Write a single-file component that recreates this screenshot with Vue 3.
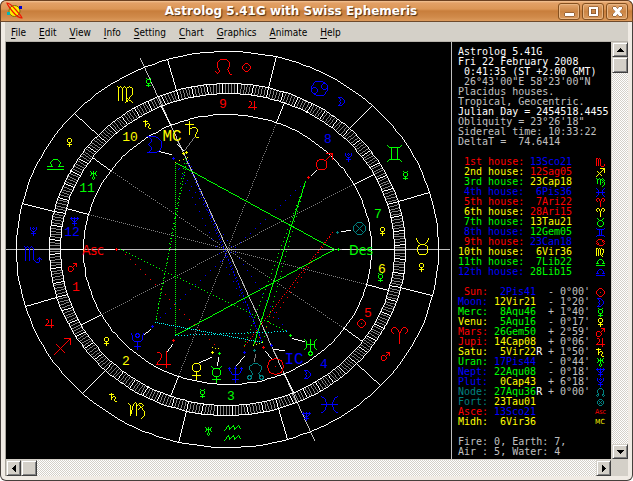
<script setup>
const menus = ['File', 'Edit', 'View', 'Info', 'Setting', 'Chart', 'Graphics', 'Animate', 'Help']

// Glyph outlines on a grid that runs from -4 to 4, drawn at double size.
const circle = (x, y, r) => {
  let d = ''
  for (let i = 0; i < 16; i++) {
    const a = (i * Math.PI) / 8
    d += `${i ? 'L' : 'M'}${(x + r * Math.cos(a)).toFixed(2)} ${(y + r * Math.sin(a)).toFixed(2)}`
  }
  return d + 'Z'
}
const glyphs = {
  Sun: circle(0, 0, 4) + 'M0 0H0',
  Moon: 'M-3.5-4L-1-4Q3.5-3.5 3.5 0Q3.5 3.5-1 4L-3.5 4Q-1.5 3.5-1.5 1.5L-3 0L-1.5-1.500Q-1.5-3.5-3.5-4',
  Mercury: 'M-2.5-4L-1.5-3H1.5L2.5-4' + circle(0, -1, 2) + 'M0 1V4M-2 2.5H2',
  Venus: circle(0, -2, 2) + 'M0 0V4M-2 2H2',
  Mars: circle(-1.5, 1.5, 2.5) + 'M.5-.5L4-4M1-4H4V-1',
  Jupiter: 'M-3-3.5H-2L-1-2.5V-1L-3.5 2.5H3.5M1.5-4V4',
  Saturn: 'M-3.5-2.5H.5M-1.5-4V2.5M-1.5 0L0-1H1.5L2.5 0V1L1.5 2.5V3.5L2 4H3',
  Uranus: 'M-3-4L-2-3V0L-3 1M3-4L2-3V0L3 1M-2-1.5H2M0-4V2' + circle(0, 3, 1),
  Neptune: 'M-3-3.5V-2L-1.5 0H1.5L3-2V-3.5M0-4V4M-1.5 2.5H1.5M-3.5-3H-2.5M2.5-3H3.5M-.5-3H.5',
  Pluto: circle(0, -3, 1) + 'M-3-4L-2.5-2.5V-1L-1.5 0H1.5L2.5-1V-2.5L3-4M0 0V4M-1.5 2.5H1.5',
  Node: 'M-2 2L-1.5 1L-3-1V-2.5L-1-4H1L3-2.5V-1L1.5 1L2 2' + circle(-3, 3, 1) + circle(3, 3, 1),
  Fortune: circle(0, 0, 3) + 'M-2-2L2 2M2-2L-2 2',
  Aries: 'M0 4V-1L-1-3L-2-4H-3L-4-3V-2L-3-1M0-1L1-3L2-4H3L4-3V-2L3-1',
  Taurus: circle(0, 1.5, 2.5) + 'M-3-4L-2.5-2.5L-1-1H1L2.5-2.5L3-4',
  Gemini: 'M-3.5-4L-2.5-3H2.5L3.5-4M-3.5 4L-2.5 3H2.5L3.5 4M-1.5-3V3M1.5-3V3',
  Cancer: circle(-2.5, 1, 1.5) + circle(2.5, -1, 1.5) + 'M-4 0L-4-1L-2-3.5H1.5L3-2.5M4 0V1L2 3.5H-1.5L-3 2.5',
  Leo: 'M-4 2.5L-3 3.5L-2 2.5L-3 .5V-2L-1.5-3.5H1.5L3-2V0L2 1.5L3 3.5L4 4',
  Virgo: 'M-4-4L-3.5-3.5V3M-3.5-3L-2.5-4L-1.5-3V3M-1.5-3L-.5-4L.5-3V3L1 3.5M.5-3L2-4L3.5-3V0L0 4M1 2L3.5 4',
  Libra: 'M-4 1H-1.5L-2.5-.5V-1L-1-2.5H1L2.5-1V-.5L1.5 1H4M-4 2.5H4',
  Scorpio: 'M-4-4L-3.5-3.5V3M-3.5-3L-2.5-4L-1.5-3V3M-1.5-3L-.5-4L.5-3V2.5L2 4H3L3.5 3V1.5M2.5 2.5L3.5 1.5L4.5 2.5',
  Sagittarius: 'M-4 4L4-4M1-4H4V-1M-3-1L1 3',
  Capricorn: 'M-4-3.5L-3-2.5V2.5L-1.5-3L-.5-4L0-3V2.5M0-2L1.5-3.5H2.5L3.5-2.5L1-.5M1.5-2.5L4 .5V2.5L2.5 4',
  Aquarius: 'M-4-1L-2-3.5L-1.5-1.5L.5-3.5L1-1.5L3-3.5L4-2M-4 4L-2 1.5L-1.5 3.5L.5 1.5L1 3.5L3 1.5L4 3',
  Pisces: 'M-4-4Q-1.5-2.5-1.5 0Q-1.5 2.5-4 4M4-4Q1.5-2.5 1.5 0Q1.5 2.5 4 4M-4 0H4',
}
// Nine-pixel versions, whole-pixel vertices only.
const smallShapes = {
  Sun: 'M-1-4H1L4-1V1L1 4H-1L-4 1V-1ZM0 0H0',
  Moon: 'M-3-4H0L3-1V1L0 4H-3L-1 2V1L-2 0L-1-1V-2Z',
  Mercury: 'M-2-4L-1-3H1L2-4M-1-3L-2-2V0L-1 1H1L2 0V-2L1-3M0 1V4M-2 3H2',
  Venus: 'M-1-4H1L2-3V-1L1 0H-1L-2-1V-3ZM0 0V4M-2 2H2',
  Mars: 'M-3-1H-1L1 1V2L-1 4H-3L-4 3V0ZM0 0L4-4M1-4H4V-1',
  Jupiter: 'M-3-4H-2L-1-3V-1L-4 2H4M2-4V4',
  Saturn: 'M-4-3H0M-2-4V2M-2 0L0-1H1L2 0V1L1 2V3L2 4H3',
  Uranus: 'M-3-4L-2-3V-1L-3 0M3-4L2-3V-1L3 0M-2-2H2M0-4V1M0 1L-1 2V3L0 4L1 3V2Z',
  Neptune: 'M-3-4V-2L-1 0H1L3-2V-4M0-4V4M-2 2H2M-4-3H-2M2-3H4M-1-3H1',
  Pluto: 'M0-4L1-3L0-2L-1-3ZM-3-4V-2L-1 0H1L3-2V-4M0 0V4M-2 2H2',
  Node: 'M-2 2L-3 0V-2L-1-4H1L3-2V0L2 2M-3 2L-4 3L-3 4L-2 3ZM3 2L4 3L3 4L2 3Z',
  Fortune: 'M-1-3H1L3-1V1L1 3H-1L-3 1V-1ZM-2-2L2 2M2-2L-2 2',
  Aries: 'M0 4V-1L-2-4H-3L-4-3V-2L-3-1M0-1L2-4H3L4-3V-2L3-1',
  Taurus: 'M-3-4L-1-2H1L3-4M-1-2L-3 0V2L-1 4H1L3 2V0L1-2',
  Gemini: 'M-4-4L-3-3H3L4-4M-4 4L-3 3H3L4 4M-1-3V3M1-3V3',
  Cancer: 'M-4-1L-2-3H1L2-2M3-2L2-1L3 0L4-1ZM4 1L2 3H-1L-2 2M-3 0L-4 1L-3 2L-2 1Z',
  Virgo: 'M-4-4V3M-3-4L-2-3V3M-1-4L0-3V2L2 4M1-4L3-3V0L1 3',
  Libra: 'M-4 1H-2L-3 0V-1L-1-3H1L3-1V0L2 1H4M-4 3H4',
  Scorpio: 'M-4-4V3M-3-4L-2-3V3M-1-4L0-3V3L1 4H3L4 3V2',
  Sagittarius: 'M-4 4L4-4M0-4H4V0M-3-1L1 3',
  Capricorn: 'M-4-4L-3-3V1M-3-2L-1-4L0-3V2M0-2L2-4L4-2L2 0M2-2L4 0V2L2 4',
  Pisces: 'M-4-4L-2-2V2L-4 4M4-4L2-2V2L4 4M-4 0H4',
}

// One square per plotted pixel, every `step` pixels along the line.
const line = ([x0, y0], [x1, y1], step = 1) => {
  const n = Math.max(Math.abs(x1 - x0), Math.abs(y1 - y0), 1)
  let d = ''
  for (let i = 0; i <= n; i += step) {
    d += `M${Math.round(x0 + ((x1 - x0) * i) / n)} ${Math.round(y0 + ((y1 - y0) * i) / n)}h1v1h-1z`
  }
  return d
}
// Turns an outline of M, L, H, V, Q and Z commands into plotted pixels.
const plot = (outline, x, y, size) => {
  const dot = (p) => [x + Math.round(p[0] * size), y + Math.round(p[1] * size)]
  let d = ''
  let cur = [0, 0]
  let start = cur
  const to = (p) => {
    d += line(dot(cur), dot(p))
    cur = p
  }
  for (const [, cmd, args] of outline.matchAll(/([MLHVQZ])([^MLHVQZ]*)/g)) {
    const n = (args.match(/-?(\d+\.?\d*|\.\d+)/g) || []).map(Number)
    if (cmd === 'M') cur = start = [n[0], n[1]]
    else if (cmd === 'L') to([n[0], n[1]])
    else if (cmd === 'H') {
      if (n[0] === cur[0]) {
        const [px, py] = dot(cur)
        d += `M${px} ${py}h1v1h-1z`
      } else to([n[0], cur[1]])
    } else if (cmd === 'V') to([cur[0], n[0]])
    else if (cmd === 'Z') to(start)
    else {
      const from = cur
      for (let i = 1; i <= 6; i++) {
        const t = i / 6, u = 1 - t
        to([0, 1].map((k) => u * u * from[k] + 2 * u * t * n[k] + t * t * n[k + 2]))
      }
    }
  }
  return d
}
const listGlyph = (name) => (smallShapes[name] ? plot(smallShapes[name], 5, 5, 1) : '')

const signs = ['Aries', 'Taurus', 'Gemini', 'Cancer', 'Leo', 'Virgo', 'Libra', 'Scorpio', 'Sagittarius', 'Capricorn', 'Aquarius', 'Pisces']
const elements = ['red', 'yellow', 'green', 'blue']
const signColor = (name) => elements[signs.indexOf(name) % 4]
const valueColor = (v) => elements[signs.findIndex((s) => s.startsWith(v.slice(2, 5))) % 4]

const header = [
  ['white', 'Astrolog 5.41G'],
  ['white', 'Fri 22 February 2008'],
  ['white', ' 0:41:35 (ST +2:00 GMT)'],
  ['gray', ' 26°43\'00"E 58°23\'00"N'],
  ['gray', 'Placidus houses.'],
  ['gray', 'Tropical, Geocentric.'],
  ['white', 'Julian Day = 2454518.4455'],
  ['gray', 'Obliquity = 23°26\'18"'],
  ['gray', 'Sidereal time: 10:33:22'],
  ['gray', 'DeltaT =  74.6414'],
]

const houses = [
  [' 1st', '13Sco21', 'Scorpio'], [' 2nd', '12Sag05', 'Sagittarius'], [' 3rd', '23Cap18', 'Capricorn'],
  [' 4th', ' 6Pis36', 'Pisces'], [' 5th', ' 7Ari22', 'Aries'], [' 6th', '28Ari15', 'Aries'],
  [' 7th', '13Tau21', 'Taurus'], [' 8th', '12Gem05', 'Gemini'], [' 9th', '23Can18', 'Cancer'],
  ['10th', ' 6Vir36', 'Virgo'], ['11th', ' 7Lib22', 'Libra'], ['12th', '28Lib15', 'Libra'],
].map(([label, value, glyph], i) => ({ label, value, glyph: listGlyph(glyph), color: elements[i % 4] }))

const planets = [
  [' Sun', ' 2Pis41', ' ', "- 0°00'", 'Sun', 'red'],
  ['Moon', '12Vir21', ' ', "- 1°20'", 'Moon', 'blue'],
  ['Merc', ' 8Aqu46', ' ', "+ 1°40'", 'Mercury', 'green'],
  ['Venu', ' 5Aqu16', ' ', "- 0°17'", 'Venus', 'yellow'],
  ['Mars', '26Gem50', ' ', "+ 2°59'", 'Mars', 'red'],
  ['Jupi', '14Cap08', ' ', "+ 0°06'", 'Jupiter', 'red'],
  ['Satu', ' 5Vir22', 'R', "+ 1°50'", 'Saturn', 'yellow'],
  ['Uran', '17Pis44', ' ', "- 0°44'", 'Uranus', 'green'],
  ['Nept', '22Aqu08', ' ', "- 0°18'", 'Neptune', 'blue'],
  ['Plut', ' 0Cap43', ' ', "+ 6°18'", 'Pluto', 'blue'],
  ['Node', '27Aqu36', 'R', "+ 0°00'", 'Node', 'teal'],
  ['Fort', '23Tau01', ' ', '', 'Fortune', 'teal'],
  ['Asce', '13Sco21', ' ', '', 'Asc', 'red'],
  ['Midh', ' 6Vir36', ' ', '', 'MC', 'yellow'],
].map(([label, value, retro, lat, name, color]) => ({ label, value, retro, lat, name, glyph: listGlyph(name), color }))

// Chart geometry
const CX = 227, CY = 249, ASC = 223.35
const at = (lon, rx, ry) => {
  const a = ((180 + lon - ASC) * Math.PI) / 180
  return [Math.round(CX + rx * Math.cos(a)), Math.round(CY - ry * Math.sin(a))]
}
const ring = (rx, ry) => {
  let d = ''
  for (let i = 0; i < 360; i += 2) d += line(at(i, rx, ry), at(i + 2, rx, ry))
  return d
}

const cusps = [223.35, 252.08, 293.3, 336.6, 7.37, 28.25, 43.35, 72.08, 113.3, 156.6, 187.37, 208.25]
let whitePath = ring(211, 198) + ring(178, 166) + ring(167, 156) + ring(144, 135)
let tickPath = ''
let cuspPath = ''
for (let i = 0; i < 360; i++) {
  const t = line(at(i, 167, 156), at(i, 178, 166))
  if (i % 5 === 0) whitePath += t
  else tickPath += t
}
for (let i = 0; i < 360; i += 30) whitePath += line(at(i, 178, 166), at(i, 211, 198))
for (const c of cusps) {
  whitePath += line(at(c, 144, 135), at(c, 167, 156))
  cuspPath += line([CX, CY], at(c, 144, 135), 2)
}
const axisPath = line([6, CY], [449, CY]) + line(at(156.6, 221, 208), at(336.6, 221, 208))

const lon = {
  Sun: 332.68, Moon: 162.35, Mercury: 308.77, Venus: 305.27, Mars: 86.83, Jupiter: 284.13, Saturn: 155.37,
  Uranus: 347.73, Neptune: 322.13, Pluto: 270.72, Node: 327.6, Fortune: 53.02, Asc: 223.35, Des: 43.35, MC: 156.6,
}
const aspects = [
  ['Moon', 'Sun', 'blue', 7], ['Saturn', 'Sun', 'blue', 3], ['MC', 'Sun', 'blue', 3],
  ['Mars', 'Pluto', 'blue', 5], ['Moon', 'Uranus', 'blue', 6],
  ['Asc', 'Mercury', 'red', 5], ['Fortune', 'Neptune', 'red', 2], ['Fortune', 'Node', 'red', 5],
  ['Moon', 'Jupiter', 'green', 2], ['Saturn', 'Pluto', 'green', 3], ['MC', 'Pluto', 'green', 5],
  ['Mars', 'Neptune', 'green', 4], ['Mars', 'Sun', 'green', 5], ['Asc', 'Uranus', 'green', 3],
  ['Mars', 'Node', 'green', 1], ['Jupiter', 'Des', 'green', 1], ['Moon', 'Des', 'green', 1],
  ['Pluto', 'Sun', 'cyan', 2], ['Jupiter', 'Uranus', 'cyan', 3],
  ['Moon', 'Saturn', 'yellow', 4], ['Moon', 'MC', 'yellow', 4], ['Venus', 'Mercury', 'yellow', 3], ['Node', 'Sun', 'yellow', 3],
].map(([a, b, color, step]) => ({ color, d: line(at(lon[a], 107, 99), at(lon[b], 107, 99), step) }))

const points = [
  [173, 158, 'blue'], [183, 153, 'yellow'], [186, 152, 'yellow'], [308, 177, 'red'], [337, 232, 'teal'], [338, 249, 'green'],
  [116, 249, 'red'], [290, 335, 'green'], [271, 345, 'blue'], [263, 347, 'red'], [254, 350, 'teal'],
  [244, 352, 'blue'], [219, 353, 'green'], [212, 352, 'yellow'], [173, 340, 'red'], [152, 326, 'blue'],
].map(([x, y, color]) => ({ color, d: `M${x - 1} ${y}h3v1h-3zM${x} ${y - 1}h1v3h-1z` }))

const leaders = [
  [[159, 151], [171, 154]], [[177, 144], [183, 150]], [[311, 175], [316, 170]], [[341, 231], [350, 230]], [[342, 249], [351, 249]],
  [[104, 249], [114, 249]], [[292, 338], [304, 341]], [[273, 349], [284, 350]], [[265, 351], [271, 358]],
  [[244, 356], [236, 365]], [[218, 357], [217, 365]], [[211, 357], [199, 362]], [[172, 344], [166, 352]],
  [[150, 329], [144, 334]],
].map(([a, b]) => line(a, b)).join('')
const dimLeaders = line([194, 137], [184, 150]) + line([255, 354], [254, 361])

const bigGlyphs = [
  ['Leo', 223, 66], ['Cancer', 319, 88], ['Gemini', 394, 153], ['Taurus', 422, 246], ['Aries', 399, 335],
  ['Pisces', 329, 404], ['Aquarius', 232, 432], ['Capricorn', 136, 410], ['Sagittarius', 62, 346],
  ['Scorpio', 32, 254], ['Libra', 55, 164], ['Virgo', 125, 94],
  ['Moon', 154, 144, 'blue'], ['Saturn', 192, 129, 'yellow'], ['Mars', 324, 161, 'red'], ['Fortune', 359, 228, 'teal'],
  ['Uranus', 310, 347, 'green'], ['Sun', 275, 366, 'red'], ['Node', 255, 371, 'teal'], ['Neptune', 235, 374, 'blue'],
  ['Mercury', 216, 374, 'green'], ['Venus', 196, 371, 'yellow'], ['Jupiter', 163, 359, 'red'], ['Pluto', 137, 341, 'blue'],
].map(([name, x, y, color]) => ({ d: plot(glyphs[name], x, y, 2), color: color || signColor(name) }))

const smallGlyphs = [
  ['Sun', 246, 67, 'red'], ['Moon', 341, 101, 'blue'], ['Mercury', 405, 175, 'green'], ['Venus', 421, 267, 'yellow'],
  ['Mars', 385, 356, 'red'], ['Neptune', 306, 416, 'blue'], ['Uranus', 208, 431, 'green'], ['Saturn', 113, 397, 'yellow'],
  ['Jupiter', 49, 323, 'red'], ['Pluto', 33, 231, 'blue'], ['Venus', 69, 142, 'yellow'], ['Mercury', 148, 82, 'green'],
  ['Jupiter', 252, 105, 'red'], ['Pluto', 348, 157, 'blue'], ['Venus', 382, 231, 'yellow'], ['Mercury', 380, 277, 'green'],
  ['Sun', 361, 323, 'red'], ['Moon', 307, 374, 'blue'], ['Mercury', 202, 393, 'green'], ['Venus', 106, 341, 'yellow'],
  ['Mars', 72, 267, 'red'], ['Neptune', 74, 221, 'blue'], ['Uranus', 93, 175, 'green'], ['Saturn', 147, 124, 'yellow'],
].map(([name, x, y, color]) => ({ d: plot(smallShapes[name], x, y, 1), color }))

const chartGlyphs = [...bigGlyphs, ...smallGlyphs]

const houseNumbers = [
  [1, 76, 286], [2, 126, 360], [3, 231, 395], [4, 324, 363], [5, 368, 312], [6, 382, 268],
  [7, 378, 213], [8, 328, 138], [9, 223, 103], [10, 130, 136], [11, 87, 187], [12, 72, 231],
].map(([n, x, y]) => ({ n, x, y, color: elements[(n - 1) % 4] }))

const angles = [
  ['Asc', 93, 250, 'red', 'narrow'], ['Des', 361, 250, 'green', 'narrow'],
  ['MC', 172, 136, 'yellow', 'wide'], ['IC', 294, 359, 'blue', 'wide'],
].map(([text, x, y, color, kind]) => ({ text, x, y, color, kind }))
</script>

<template>
  <div class="window">
    <header class="titlebar">
      <svg class="logo" viewBox="0 0 18 18" aria-hidden="true">
        <circle cx="8.5" cy="9" r="5.5" fill="#ffee00" stroke="#7a6a10" stroke-width="1" />
        <path d="M13 4h3v3h-3z" fill="#0000d0" />
        <path d="M1 10h3v3H1z" fill="#00b8b8" />
        <path d="M1 1Q4 1 10 8T16 16Q12 16 7 10T1 1Z" fill="none" stroke="#f01800" stroke-width="1.2" />
      </svg>
      <h1>Astrolog 5.41G with Swiss Ephemeris</h1>
      <div class="controls">
        <button type="button" aria-label="Minimize">
          <svg viewBox="0 0 20 16"><path d="M6 10h9v3H6z" class="ico" /></svg>
        </button>
        <button type="button" aria-label="Maximize">
          <svg viewBox="0 0 20 16"><path d="M6 4h9v9H6zM8 6v5h5V6z" fill-rule="evenodd" class="ico" /></svg>
        </button>
        <button type="button" aria-label="Close">
          <svg viewBox="0 0 20 16"><path d="M6 4h3l1.500 2L12 4h3v2l-2.500 2.500L15 11v2h-3l-1.500-2L9 13H6v-2l2.500-2.500L6 6z" class="ico" /></svg>
        </button>
      </div>
    </header>

    <div class="frame">
      <nav class="menubar">
        <button v-for="m in menus" :key="m" type="button"><u>{{ m[0] }}</u>{{ m.slice(1) }}</button>
      </nav>

      <div class="client">
        <main class="canvas">
          <svg class="chart" viewBox="6 42 445 417" role="img" aria-label="Chart wheel">
            <path :d="cuspPath" class="f-dim" />
            <path :d="tickPath" class="f-dim" />
            <path :d="axisPath" class="f-gray" />
            <path :d="whitePath" class="f-white" />
            <path v-for="(a, i) in aspects" :key="'a' + i" :d="a.d" :class="'f-' + a.color" />
            <path :d="dimLeaders" class="f-dim" />
            <path :d="leaders" class="f-white" />
            <path v-for="(p, i) in points" :key="'p' + i" :d="p.d" :class="'f-' + p.color" />
            <path v-for="(g, i) in chartGlyphs" :key="'g' + i" :d="g.d" :class="'f-' + g.color" />
            <text v-for="h in houseNumbers" :key="'h' + h.n" :x="h.x" :y="h.y + 5" :class="['num', 'f-' + h.color]">{{ h.n }}</text>
            <text v-for="a in angles" :key="a.text" :x="a.x" :y="a.y + 5" :class="[a.kind, 'f-' + a.color]">{{ a.text }}</text>
          </svg>

          <aside class="info">
            <section>
              <p v-for="[color, text] in header" :key="text" :class="color">{{ text }}</p>
            </section>

            <table aria-label="House cusps">
              <tbody>
                <tr v-for="h in houses" :key="h.label">
                  <th scope="row" class="house" :class="h.color">{{ h.label }} house:</th>
                  <td :class="valueColor(h.value)">{{ h.value }}</td>
                  <td class="symbol">
                    <svg viewBox="0 0 11 10"><path :d="h.glyph" :class="'f-' + h.color" /></svg>
                  </td>
                </tr>
              </tbody>
            </table>

            <table aria-label="Planet positions">
              <tbody>
                <tr v-for="p in planets" :key="p.label">
                  <th scope="row" class="planet" :class="p.color">{{ p.label }}:</th>
                  <td class="pos" :class="valueColor(p.value)">{{ p.value }}<span class="white">{{ p.retro }}</span></td>
                  <td class="gray">{{ p.lat }}</td>
                  <td class="symbol" :class="p.color">
                    <svg v-if="p.glyph" viewBox="0 0 11 10"><path :d="p.glyph" :class="'f-' + p.color" /></svg>
                    <span v-else class="tiny">{{ p.name }}</span>
                  </td>
                </tr>
              </tbody>
            </table>

            <section class="gray">
              <p>Fire: 0, Earth: 7,</p>
              <p>Air : 5, Water: 4</p>
            </section>
          </aside>
        </main>

        <div class="track vertical">
          <button type="button" class="bevel" aria-label="Scroll up"><svg viewBox="0 0 7 4"><path d="M3 0h1v1h1v1h1v1h1v1H0V3h1V2h1V1h1z" /></svg></button>
          <div class="bevel thumb"></div>
          <button type="button" class="bevel last" aria-label="Scroll down"><svg viewBox="0 0 7 4"><path d="M0 0h7v1H6v1H5v1H4v1H3V3H2V2H1V1H0z" /></svg></button>
        </div>
        <div class="track horizontal">
          <button type="button" class="bevel" aria-label="Scroll left"><svg class="side" viewBox="0 0 4 7"><path d="M4 0v7H3V6H2V5H1V4H0V3h1V2h1V1h1V0z" /></svg></button>
          <div class="bevel thumb"></div>
          <button type="button" class="bevel last" aria-label="Scroll right"><svg class="side" viewBox="0 0 4 7"><path d="M0 0v7h1V6h1V5h1V4h1V3H3V2H2V1H1V0z" /></svg></button>
        </div>
        <div class="corner"></div>
      </div>
    </div>
  </div>
</template>

<style>
body {
  margin: 0;
  background: #fff;
}
</style>

<style scoped>
* {
  box-sizing: border-box;
}
.window {
  display: flex;
  flex-direction: column;
  min-height: 100vh;
  overflow: hidden;
  border-radius: 6px;
  background: #46403c;
}
button {
  margin: 0;
  padding: 0;
  border: 0;
  background: none;
  color: inherit;
  font: inherit;
}
.titlebar {
  display: flex;
  align-items: center;
  height: 22px;
  padding: 0 4px 0 5px;
  border: 1px solid #6b4020;
  border-bottom-color: #6e4a2c;
  border-radius: 6px 6px 0 0;
  background: linear-gradient(#f3c496 0, #e2a066 2px, #dc9656 8px, #c87e3c 10px, #d08a4a 16px, #dc9a5c 20px);
}
.logo {
  width: 18px;
  height: 18px;
}
.titlebar h1 {
  flex: 1;
  margin: 0;
  color: #fff;
  font: bold 12px/20px "DejaVu Sans", sans-serif;
  text-align: center;
  text-shadow: 1px 1px 1px #4a2c10;
  white-space: nowrap;
}
.controls {
  display: flex;
  gap: 2px;
}
.controls button {
  display: block;
  width: 22px;
  height: 17px;
  border: 1px solid #84501f;
  border-radius: 3px;
  background: linear-gradient(#e3a770, #cb8544 50%, #d99a5e);
  box-shadow: inset 0 0 0 1px #e8b583;
}
.controls svg {
  display: block;
  width: 20px;
  height: 16px;
  margin-top: -1px;
}
.ico {
  fill: #fff;
  stroke: #6b4020;
  stroke-width: 1px;
  paint-order: stroke;
}
.frame {
  flex: 1;
  display: flex;
  flex-direction: column;
  margin: 0 1px 1px;
  padding: 0 4px 4px;
  border-radius: 0 0 5px 5px;
  background: #f0ebe4;
}
.menubar {
  display: flex;
  gap: 13px;
  height: 20px;
  padding: 0 6px;
  border-bottom: 1px solid #b8b4ac;
  background: #d4d0c8;
  color: #000;
  font: 10px/22px "DejaVu Sans Condensed", "DejaVu Sans", sans-serif;
}
.menubar u {
  text-underline-offset: 2px;
}
.client {
  flex: 1;
  display: grid;
  grid-template-columns: 1fr 17px;
  grid-template-rows: 1fr 17px;
  border-left: 1px solid #a8a49c;
  background: #d4d0c8;
}
.canvas {
  display: flex;
  min-width: 0;
  background: #000;
}
.chart {
  flex: 1;
  min-width: 0;
  display: block;
  shape-rendering: crispEdges;
}
.num,
.narrow,
.wide {
  text-anchor: middle;
}
.num {
  font: 13px "Liberation Mono", monospace;
}
.narrow {
  font: 14px "Liberation Sans Narrow", "DejaVu Sans Condensed", sans-serif;
}
.wide {
  font: 16px "Liberation Mono", monospace;
}
.info {
  display: flex;
  flex-direction: column;
  gap: 10px;
  width: 160px;
  padding: 5px 0 0 6px;
  border-left: 1px solid #c0c0c0;
  font: 10px/10px "DejaVu Sans Mono", monospace;
  white-space: pre;
}
.info p {
  margin: 0;
}
.info table {
  width: 150px;
  table-layout: fixed;
  border-collapse: collapse;
}
.info th,
.info td {
  height: 10px;
  padding: 0;
  font-weight: normal;
  line-height: 10px;
  text-align: left;
  vertical-align: top;
}
.info .house {
  width: 72px;
}
.info .planet {
  width: 36px;
}
.info .pos {
  width: 54px;
}
.info .symbol {
  width: 13px;
}
.symbol svg {
  display: block;
  width: 11px;
  height: 10px;
  shape-rendering: crispEdges;
}
.tiny {
  display: block;
  font: 7px/10px "Liberation Sans Narrow", "DejaVu Sans Condensed", sans-serif;
}
.white { color: #fff; }
.gray { color: #c0c0c0; }
.red { color: #f00; }
.yellow { color: #ff0; }
.green { color: #0f0; }
.blue { color: #00f; }
.teal { color: #008080; }
.f-white { fill: #fff; }
.f-gray { fill: #c0c0c0; }
.f-dim { fill: #808080; }
.f-red { fill: #f00; }
.f-yellow { fill: #ff0; }
.f-green { fill: #0f0; }
.f-blue { fill: #00f; }
.f-cyan { fill: #0ff; }
.f-teal { fill: #008080; }
.track {
  display: flex;
  background: repeating-conic-gradient(#fff 0 25%, #d4d0c8 0 50%) 0 0 / 2px 2px;
}
.vertical {
  flex-direction: column;
  border-left: 1px solid #d4d0c8;
}
.horizontal {
  border-top: 1px solid #d4d0c8;
}
.corner {
  background: #d4d0c8;
}
.bevel {
  display: flex;
  align-items: center;
  justify-content: center;
  flex: none;
  width: 16px;
  height: 15px;
  border: 1px solid;
  border-color: #d4d0c8 #404040 #404040 #d4d0c8;
  background: #d4d0c8;
  box-shadow: inset 1px 1px #fff, inset -1px -1px #808080;
}
.horizontal .bevel {
  width: 15px;
  height: 16px;
}
.vertical .thumb {
  height: 16px;
}
.horizontal .thumb {
  width: 16px;
}
.vertical .last {
  margin-top: auto;
}
.horizontal .last {
  margin-left: auto;
}
.bevel svg {
  width: 7px;
  height: 4px;
  shape-rendering: crispEdges;
}
.bevel svg.side {
  width: 4px;
  height: 7px;
}
</style>
